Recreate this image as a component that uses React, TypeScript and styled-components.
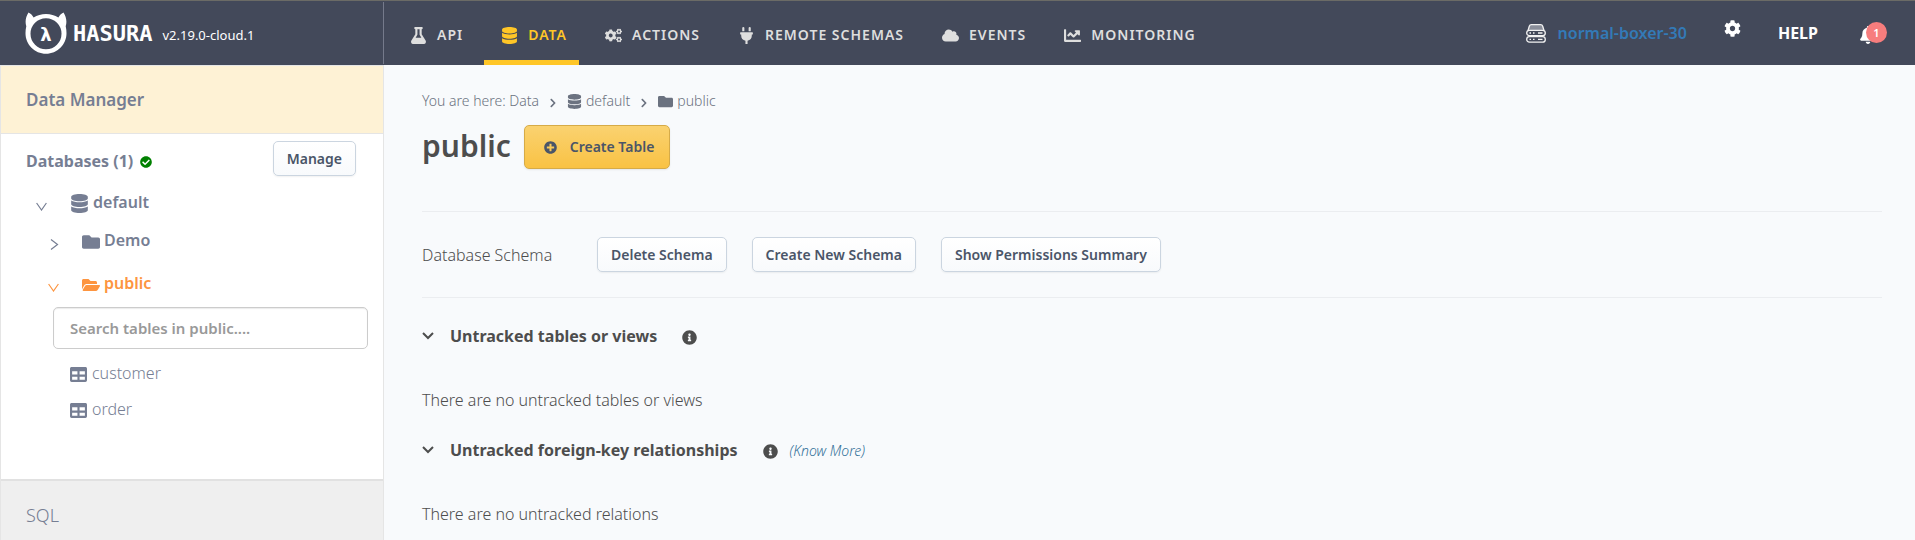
import React from "react";
import styled, { createGlobalStyle, css } from "styled-components";
import {
  FaBell,
  FaChartLine,
  FaCheckCircle,
  FaChevronRight,
  FaCloud,
  FaCog,
  FaCogs,
  FaDatabase,
  FaFlask,
  FaFolder,
  FaFolderOpen,
  FaInfoCircle,
  FaPlug,
  FaPlusCircle,
  FaTable,
} from "react-icons/fa";

const color = {
  header: "#43495a",
  headerText: "#dedede",
  accent: "#ffc627",
  page: "#f8fafc",
  line: "#e5e5e5",
  rule: "#ebedf0",
  slate: "#767e93",
  active: "#fd9540",
  text: "#4d4d4d",
  button: "#4a5568",
};

const GlobalStyle = createGlobalStyle`
  *, *::before, *::after { box-sizing: border-box; }
  body {
    margin: 0;
    background: ${color.page};
    color: ${color.text};
    font: 350 16px/24px "Noto Sans", "Open Sans", sans-serif;
  }
  h1, h2, p, ul, ol { margin: 0; padding: 0; }
  ul, ol { list-style: none; }
  a { color: inherit; text-decoration: none; }
  button { font: inherit; color: inherit; cursor: pointer; }
  svg { flex: none; }
`;

const Page = styled.div`
  display: flex;
  flex-direction: column;
  min-height: 100vh;
`;

/* ---------- header ---------- */

const Header = styled.header`
  display: flex;
  height: 65px;
  border-top: 1px solid #6b6b66;
  background: ${color.header};
`;

const Brand = styled.div`
  display: flex;
  flex: none;
  align-items: center;
  width: 384px;
  margin: 1px 0;
  padding-left: 25px;
  border-right: 1px solid #757a8b;
  color: #fff;
`;

const BrandLink = styled.a`
  display: flex;
  align-items: center;
  gap: 6px;
`;

const Wordmark = styled.span`
  padding-top: 2px;
  font: 700 22px/24px "DejaVu Sans Mono", monospace;
`;

const Version = styled.a`
  margin-left: 10px;
  padding-top: 4px;
  font-size: 13px;
  font-weight: 400;
`;

const MainNav = styled.nav`
  display: flex;
  flex: 1;
  gap: 9px;
  padding-left: 9px;
`;

const NavItem = styled.a<{ $active?: boolean }>`
  display: flex;
  align-items: center;
  gap: 10px;
  padding: 9px 12px 0 16px;
  border-bottom: 5px solid ${(p) => (p.$active ? color.accent : "transparent")};
  color: ${(p) => (p.$active ? color.accent : color.headerText)};
  font-size: 14px;
  font-weight: 600;
  letter-spacing: 1px;
  white-space: nowrap;
`;

const NavIcon = styled.span`
  display: flex;
  justify-content: center;
  width: 18px;
`;

const HeaderTools = styled.div`
  display: flex;
  align-items: center;
  padding: 0 28px 0 0;
  color: #fff;
  font-weight: 600;
`;

const Project = styled.a`
  display: flex;
  align-items: center;
  gap: 12px;
  color: #337ab7;
`;

const IconButton = styled.button`
  position: relative;
  display: flex;
  align-items: center;
  padding: 0;
  border: 0;
  background: none;
`;

const SettingsButton = styled(IconButton)`
  margin: 0 37px;
  padding-bottom: 9px;
`;

const HelpButton = styled(IconButton)`
  font-weight: 700;
`;

const BellButton = styled(IconButton)`
  margin-left: 41px;
  padding: 4px 10px 0 0;
`;

const Badge = styled.span`
  position: absolute;
  top: 0;
  right: 0;
  width: 21px;
  height: 21px;
  border-radius: 50%;
  background: #f77d7d;
  font-size: 11px;
  line-height: 21px;
  text-align: center;
`;

/* ---------- body ---------- */

const Body = styled.div`
  display: flex;
  flex: 1;
`;

const Sidebar = styled.aside`
  display: flex;
  flex: none;
  flex-direction: column;
  width: 384px;
  border: 1px solid ${color.line};
  border-bottom: 0;
  background: #fff;
  color: ${color.slate};
`;

const SidebarTitle = styled.a`
  padding: 22px 25px 21px;
  border-bottom: 1px solid ${color.line};
  background: #fef2d5;
  font-size: 17px;
  font-weight: 600;
`;

const DatabasesRow = styled.div`
  display: flex;
  justify-content: space-between;
  align-items: flex-end;
  padding: 7px 27px 7px 25px;
`;

const DatabasesLink = styled.a`
  display: flex;
  align-items: center;
  gap: 7px;
  font-weight: 700;
  line-height: 29px;
`;

const lightButton = css`
  border: 1px solid #cbd5e0;
  background: linear-gradient(#fff, #f8fafc);
  box-shadow: 0 1px 2px rgba(0, 0, 0, 0.06);
`;

const goldButton = css`
  border: 1px solid #d6ab48;
  background: linear-gradient(#fad270, #f9c244);
  box-shadow: 0 1px 2px rgba(0, 0, 0, 0.08);
`;

const Button = styled.button<{ $primary?: boolean }>`
  display: flex;
  align-items: center;
  gap: 13px;
  height: ${(p) => (p.$primary ? 44 : 35)}px;
  padding: ${(p) => (p.$primary ? "0 15px 0 19px" : "0 13px")};
  border-radius: 5px;
  color: ${color.button};
  font-size: 14px;
  font-weight: 600;
  white-space: nowrap;
  ${(p) => (p.$primary ? goldButton : lightButton)}
`;

const TreeRow = styled.button<{ $depth: number; $active?: boolean }>`
  display: flex;
  align-items: center;
  width: 100%;
  height: ${(p) => (p.$active ? 48 : 38)}px;
  padding: 0 0 0 ${(p) => 35 + p.$depth * 12}px;
  border: 0;
  background: none;
  color: ${(p) => (p.$active ? color.active : "inherit")};
  font-weight: 600;
`;

const Caret = styled.span`
  display: flex;
  width: 11px;
  margin-right: 23px;
  padding-top: 8px;
`;

const TreeLabel = styled.span`
  display: flex;
  align-items: center;
  gap: 4px;
  svg { margin-top: 3px; }
`;

const Search = styled.input`
  display: block;
  width: calc(100% - 67px);
  height: 42px;
  margin: 0 15px 6px 52px;
  padding: 0 16px;
  border: 1px solid #ccc;
  border-radius: 5px;
  box-shadow: inset 0 1px 1px rgba(0, 0, 0, 0.08);
  font: 600 15px "Noto Sans", sans-serif;
  color: ${color.text};
  &::placeholder { color: #999; }
`;

const TableLink = styled.a`
  display: flex;
  align-items: center;
  gap: 5px;
  height: 36px;
  padding-left: 69px;
  svg { margin-top: 3px; }
`;

const TreeSection = styled.div`
  padding-bottom: 52px;
`;

const SqlLink = styled.a`
  flex: 1;
  padding: 22px 25px;
  border-top: 2px solid #e1e1e1;
  background: #efefef;
  font-size: 18px;
`;

/* ---------- content ---------- */

const Content = styled.main`
  flex: 1;
  min-width: 0;
  padding: 24px 33px 14px 38px;
`;

const Breadcrumb = styled.ol`
  display: flex;
  align-items: center;
  color: #6b7280;
  font-size: 14px;
`;

const Crumb = styled.li`
  display: flex;
  align-items: center;
  gap: 4px;
`;

const CrumbArrow = styled(FaChevronRight)`
  margin: 3px 9px 0;
`;

const TitleRow = styled.div`
  display: flex;
  align-items: center;
  gap: 13px;
  margin: 12px 0 42px;
`;

const Title = styled.h1`
  padding-bottom: 2px;
  font-size: 30px;
  font-weight: 600;
  line-height: 40px;
`;

const SchemaRow = styled.div`
  display: flex;
  align-items: center;
  gap: 25px;
  padding: 25px 0;
  border: solid ${color.rule};
  border-width: 1px 0;
`;

const SchemaLabel = styled.span`
  width: 150px;
`;

const Section = styled.section`
  padding-top: 26px;
`;

const SectionHead = styled.div`
  display: flex;
  align-items: center;
  margin-bottom: 40px;
`;

const SectionToggle = styled.button`
  display: flex;
  align-items: center;
  gap: 16px;
  padding: 0;
  border: 0;
  background: none;
`;

const SectionTitle = styled.h2`
  margin-right: 25px;
  font-size: 16px;
  font-weight: 700;
  line-height: 24px;
`;

const InfoIcon = styled(FaInfoCircle)`
  margin-top: 3px;
`;

const KnowMore = styled.a`
  margin: 2px 0 0 12px;
  color: #337199;
  font-size: 14px;
  font-style: italic;
  line-height: 22px;
`;

/* ---------- drawings ---------- */

const HasuraMark = () => (
  <svg width="42" height="42" viewBox="0 0 42 42" aria-hidden="true">
    <path
      fill="#fff"
      fillRule="evenodd"
      d="M3.500 0.500C5.800 1.500 7.400 3.200 8.600 5.600C12.200 3.200 16.400 1.900 21 1.900S29.800 3.200 33.400 5.600C34.600 3.200 36.200 1.500 38.500 0.500C41.200 4.800 42.200 9.500 40.700 14.200C41.300 16.600 41.500 18.800 41.500 21.200C41.500 32.500 32.300 41.700 21 41.700S0.500 32.500 0.500 21.200C0.500 18.800 0.700 16.600 1.300 14.200C-0.200 9.500 0.800 4.800 3.500 0.500ZM21 6.300A15.500 15.500 0 1 0 21 37.300A15.500 15.500 0 1 0 21 6.300Z"
    />
    <text x="21" y="29" fill="#fff" fontFamily="DejaVu Sans, sans-serif" fontWeight="700" fontSize="18" textAnchor="middle">
      λ
    </text>
  </svg>
);

const ServerIcon = () => (
  <svg width="20" height="19" viewBox="0 0 20 19" fill="none" stroke="#f2f2f2" strokeWidth="1.300" aria-hidden="true">
    <path d="M2 6.500 3.300 2.200Q3.800 0.700 5.300 0.700H14.700Q16.200 0.700 16.700 2.200L18 6.500" fill="#8a8e9a" />
    <rect x="0.700" y="6.300" width="18.600" height="5.400" rx="2.700" />
    <rect x="0.700" y="12.700" width="18.600" height="5.400" rx="2.700" />
    <path d="M3.500 9H5M7 9H8.500M12 9H16.500M3.500 15.400H5M7 15.400H8.500M12 15.400H16.500" />
  </svg>
);

const ThinDown = () => (
  <svg width="11" height="9" viewBox="0 0 11 9" fill="none" stroke="currentColor" strokeWidth="1.200" aria-hidden="true">
    <path d="M0.600 1 5.500 8 10.400 1" />
  </svg>
);

const ThinRight = () => (
  <svg width="11" height="11" viewBox="0 0 11 11" fill="none" stroke="currentColor" strokeWidth="1.200" aria-hidden="true">
    <path d="M3 0.600 9.500 5.500 3 10.400" />
  </svg>
);

const SectionChevron = () => (
  <svg width="12" height="8" viewBox="0 0 12 8" fill="none" stroke="currentColor" strokeWidth="2" aria-hidden="true">
    <path d="M1 1 6 6 11 1" />
  </svg>
);

const navItems = [
  { label: "API", icon: <FaFlask size={17} /> },
  { label: "DATA", icon: <FaDatabase size={17} />, active: true },
  { label: "ACTIONS", icon: <FaCogs size={17} /> },
  { label: "REMOTE SCHEMAS", icon: <FaPlug size={17} /> },
  { label: "EVENTS", icon: <FaCloud size={17} /> },
  { label: "MONITORING", icon: <FaChartLine size={17} /> },
];

const sections = [
  { title: "Untracked tables or views", body: "There are no untracked tables or views" },
  { title: "Untracked foreign-key relationships", body: "There are no untracked relations", more: true },
];

export default function App() {
  return (
    <Page>
      <GlobalStyle />
      <Header>
        <Brand>
          <BrandLink href="#home">
            <HasuraMark />
            <Wordmark>HASURA</Wordmark>
          </BrandLink>
          <Version href="#version">v2.19.0-cloud.1</Version>
        </Brand>
        <MainNav>
          {navItems.map((item) => (
            <NavItem key={item.label} href="#nav" $active={item.active}>
              <NavIcon>{item.icon}</NavIcon>
              {item.label}
            </NavItem>
          ))}
        </MainNav>
        <HeaderTools>
          <Project href="#project">
            <ServerIcon />
            normal-boxer-30
          </Project>
          <SettingsButton aria-label="Settings">
            <FaCog size={17} />
          </SettingsButton>
          <HelpButton>HELP</HelpButton>
          <BellButton aria-label="Notifications">
            <FaBell size={18} />
            <Badge>1</Badge>
          </BellButton>
        </HeaderTools>
      </Header>

      <Body>
        <Sidebar>
          <SidebarTitle href="#data">Data Manager</SidebarTitle>
          <TreeSection>
            <DatabasesRow>
              <DatabasesLink href="#databases">
                Databases (1)
                <FaCheckCircle size={12} color="#008000" />
              </DatabasesLink>
              <Button>Manage</Button>
            </DatabasesRow>
            <TreeRow $depth={0}>
              <Caret>
                <ThinDown />
              </Caret>
              <TreeLabel>
                <FaDatabase size={19} />
                default
              </TreeLabel>
            </TreeRow>
            <TreeRow $depth={1}>
              <Caret>
                <ThinRight />
              </Caret>
              <TreeLabel>
                <FaFolder size={18} />
                Demo
              </TreeLabel>
            </TreeRow>
            <TreeRow $depth={1} $active>
              <Caret>
                <ThinDown />
              </Caret>
              <TreeLabel>
                <FaFolderOpen size={18} />
                public
              </TreeLabel>
            </TreeRow>
            <Search type="text" aria-label="Search tables" placeholder="Search tables in public...." />
            {["customer", "order"].map((name) => (
              <TableLink key={name} href="#table">
                <FaTable size={17} />
                {name}
              </TableLink>
            ))}
          </TreeSection>
          <SqlLink href="#sql">SQL</SqlLink>
        </Sidebar>

        <Content>
          <Breadcrumb>
            <Crumb>
              <span>
                You are here: <a href="#data">Data</a>
              </span>
            </Crumb>
            <CrumbArrow size={10} />
            <Crumb>
              <FaDatabase size={15} />
              <a href="#default">default</a>
            </Crumb>
            <CrumbArrow size={10} />
            <Crumb>
              <FaFolder size={15} />
              <a href="#public">public</a>
            </Crumb>
          </Breadcrumb>
          <TitleRow>
            <Title>public</Title>
            <Button $primary>
              <FaPlusCircle size={13} />
              Create Table
            </Button>
          </TitleRow>
          <SchemaRow>
            <SchemaLabel>Database Schema</SchemaLabel>
            <Button>Delete Schema</Button>
            <Button>Create New Schema</Button>
            <Button>Show Permissions Summary</Button>
          </SchemaRow>
          {sections.map((s) => (
            <Section key={s.title}>
              <SectionHead>
                <SectionToggle>
                  <SectionChevron />
                  <SectionTitle>{s.title}</SectionTitle>
                </SectionToggle>
                <InfoIcon size={15} />
                {s.more && <KnowMore href="#more">(Know More)</KnowMore>}
              </SectionHead>
              <p>{s.body}</p>
            </Section>
          ))}
        </Content>
      </Body>
    </Page>
  );
}
